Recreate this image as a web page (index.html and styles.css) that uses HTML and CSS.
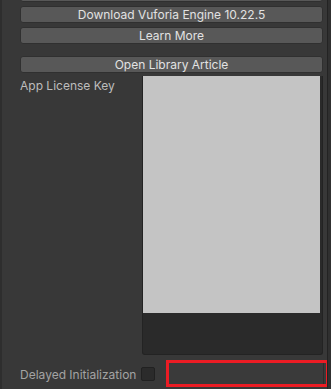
FILE: index.html
```html
<!DOCTYPE html>
<html lang="en">
<head>
    <meta charset="UTF-8">
    <meta name="viewport" content="width=device-width, initial-scale=1.0">
    <title>Vuforia Configuration</title>
    <link rel="stylesheet" href="styles.css">
</head>
<body>
    <div class="inspector">
        <!-- ปุ่มด้านบน (ปุ่มแรกถูกเลื่อนออกไปนอกจอ) -->
        <div class="btn btn-first"></div>
        <button class="btn">Download Vuforia Engine 10.22.5</button>
        <button class="btn">Learn More</button>
        <button class="btn btn-spaced">Open Library Article</button>

        <!-- License key -->
        <div class="field-row">
            <label class="field-label">App License Key</label>
            <div class="text-area">
                <div class="text-area-content"></div>
            </div>
        </div>

        <div class="field-row check-row">
            <label class="field-label dim">Delayed Initialization</label>
            <span class="checkbox"></span>
            <div class="highlight">
                <div class="highlight-field"></div>
            </div>
        </div>

        <div class="field-row">
            <span class="field-label"></span>
            <div class="btn btn-next"></div>
        </div>
    </div>
    <div class="scrollbar"></div>
</body>
</html>
```

FILE: styles.css
```css
* {
    box-sizing: border-box;
}

body {
    margin: 0;
    height: 389px;
    overflow: hidden;
    display: flex;
    background-color: #383838;
    font-family: Inter, "Noto Sans", sans-serif;
    font-size: 12px;
}

.inspector {
    width: 327px;
    height: 389px;
    overflow: hidden;
    border-left: 2px solid #2e2e2e;
    padding: 0 4px 0 18px;
    display: flex;
    flex-direction: column;
}

.scrollbar {
    width: 4px;
    height: 389px;
    background-color: #303030;
    border-left: 1px solid #232323;
}

.btn {
    display: block;
    width: 100%;
    height: 17px;
    margin-top: 4px;
    padding: 0;
    background-color: #585858;
    border: 1px solid #303030;
    border-radius: 3px;
    color: #e2e2e2;
    font-family: inherit;
    font-size: 12px;
    line-height: 15px;
    flex: none;
}

.btn-first {
    margin-top: -15px;
}

.btn-spaced {
    margin-top: 12px;
}

.field-row {
    display: flex;
    margin-top: 3px;
    flex: none;
}

.field-label {
    width: 122px;
    flex: none;
    padding-top: 2px;
    line-height: 16px;
    color: #bdbdbd;
}

.field-label.dim {
    width: 121px;
    padding-top: 2px;
    color: #a3a3a3;
}

.text-area {
    width: 181px;
    height: 279px;
    background-color: #2a2a2a;
    border: 1px solid #232323;
    border-top: none;
    border-radius: 0 0 3px 3px;
    padding-right: 2px;
}

.text-area-content {
    height: 237px;
    background-color: #c4c4c4;
}

.check-row {
    margin-top: 5px;
    align-items: center;
}

.checkbox {
    width: 14px;
    height: 14px;
    flex: none;
    margin-top: 1px;
    background-color: #2b2b2b;
    border: 1px solid #212121;
    border-radius: 2px;
}

.highlight {
    position: relative;
    z-index: 1;
    width: 163px;
    height: 27px;
    flex: none;
    margin-left: 11px;
    border: 3px solid #ec1c24;
    padding: 0 2px 0 1px;
    background-color: #3a3a3a;
}

.highlight-field {
    height: 100%;
    border-right: 1px solid #2c2c2c;
}

.btn-next {
    width: 181px;
    margin-top: 0;
}
```
